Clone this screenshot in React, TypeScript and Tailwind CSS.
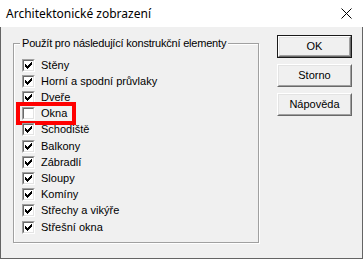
import React from "react";

type Item = { label: string; checked: boolean; h: string };

const items: Item[] = [
  { label: "Stěny", checked: true, h: "h-[16px]" },
  { label: "Horní a spodní průvlaky", checked: true, h: "h-[16px]" },
  { label: "Dveře", checked: true, h: "h-[16px]" },
  { label: "Okna", checked: false, h: "h-[16px]" },
  { label: "Schodiště", checked: true, h: "h-[17px]" },
  { label: "Balkony", checked: true, h: "h-[16px]" },
  { label: "Zábradlí", checked: true, h: "h-[16px]" },
  { label: "Sloupy", checked: true, h: "h-[16px]" },
  { label: "Komíny", checked: true, h: "h-[16px]" },
  { label: "Střechy a vikýře", checked: true, h: "h-[17px]" },
  { label: "Střešní okna", checked: true, h: "h-[16px]" },
];

function Check({ checked }: { checked: boolean }) {
  return (
    <div className="w-[13px] h-[13px] shrink-0 border border-t-[#a0a0a0] border-l-[#a0a0a0] border-r-white border-b-white">
      <div className="w-full h-full border border-t-[#696969] border-l-[#696969] border-r-[#e3e3e3] border-b-[#e3e3e3] bg-white flex items-center justify-center">
        {checked && (
          <svg width="7" height="7" viewBox="0 0 7 7" shapeRendering="crispEdges">
            <path
              fill="#000"
              d="M0 2h1v3H0z M1 3h1v3H1z M2 4h1v3H2z M3 3h1v3H3z M4 2h1v3H4z M5 1h1v3H5z M6 0h1v3H6z"
            />
          </svg>
        )}
      </div>
    </div>
  );
}

function Btn({ label, def }: { label: string; def?: boolean }) {
  const face = (
    <div className="w-full h-full border border-t-white border-l-white border-r-[#696969] border-b-[#696969]">
      <div className="w-full h-full border border-t-[#e3e3e3] border-l-[#e3e3e3] border-r-[#a0a0a0] border-b-[#a0a0a0] flex items-center justify-center text-[11px] text-black">
        {label}
      </div>
    </div>
  );
  return (
    <div className={def ? "w-[75px] h-[23px] border border-[#1a1a1a]" : "w-[75px] h-[23px]"}>{face}</div>
  );
}

export default function App() {
  return (
    <div
      className="w-[363px] h-[259px] flex flex-col bg-[#f0f0f0] overflow-hidden"
      style={{ fontFamily: '"Liberation Sans", Arial, sans-serif' }}
    >
      <div className="h-[27px] bg-white flex items-center justify-between shrink-0">
        <span
          className="pl-[6px] text-[12px] text-black leading-none"
          style={{ fontFamily: '"Noto Sans", "Open Sans", sans-serif' }}
        >
          Architektonické zobrazení
        </span>
        <svg width="11" height="11" viewBox="0 0 11 11" className="mr-[11px]">
          <path d="M0.5 0.5L10.5 10.5M10.5 0.5L0.5 10.5" stroke="#000" strokeWidth="1" />
        </svg>
      </div>
      <div className="flex-1 flex border-l border-r border-b border-[#646464] pl-[12px] gap-[18px]">
        <div className="relative mt-[16px] w-[246px] h-[200px] border border-[#a0a0a0] shadow-[inset_1px_1px_0_#ffffff,1px_1px_0_#ffffff] pt-[13px] pl-[8px]">
          <span className="absolute left-[6px] top-[-7px] px-[2px] bg-[#f0f0f0] text-[11px] leading-[13px] tracking-[-0.2px] text-black">
            Použít pro následující konstrukční elementy
          </span>
          <div className="flex flex-col">
            {items.map((it) => (
              <div key={it.label} className={`relative flex items-center gap-[6px] ${it.h}`}>
                <Check checked={it.checked} />
                <span className="text-[11px] text-black leading-none">{it.label}</span>
                {it.label === "Okna" && (
                  <div className="absolute left-[-6px] top-[-3px] w-[60px] h-[23px] border-[4px] border-[#ff0000]" />
                )}
              </div>
            ))}
          </div>
        </div>
        <div className="flex flex-col mt-[8px] gap-[6px]">
          <Btn label="OK" def />
          <Btn label="Storno" />
          <Btn label="Nápověda" />
        </div>
      </div>
    </div>
  );
}
